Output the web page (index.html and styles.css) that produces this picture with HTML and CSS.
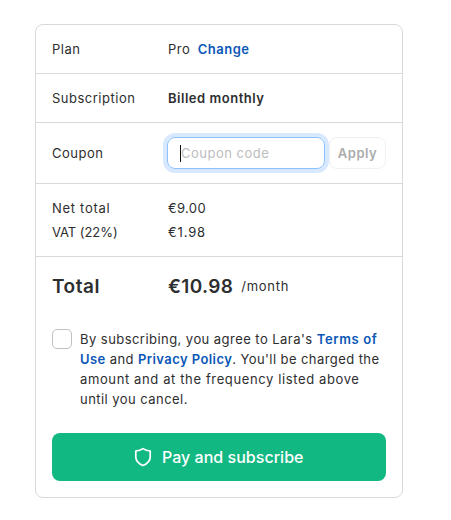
FILE: index.html
```html
<!DOCTYPE html>
<html lang="en">
<head>
<meta charset="utf-8">
<title>Subscription checkout</title>
<link rel="stylesheet" href="styles.css">
</head>
<body>
<main class="card">
  <section class="row plan">
    <span class="label">Plan</span>
    <span class="value"><span>Pro</span><a class="link change">Change</a></span>
  </section>
  <section class="row subscription">
    <span class="label">Subscription</span>
    <span class="value strong">Billed monthly</span>
  </section>
  <section class="row coupon">
    <span class="label">Coupon</span>
    <div class="field"><span class="caret"></span><span class="placeholder">Coupon code</span></div>
    <button class="apply">Apply</button>
  </section>
  <section class="amounts">
    <div class="line"><span class="label net">Net total</span><span>€9.00</span></div>
    <div class="line"><span class="label vat">VAT (22%)</span><span class="tax">€1.98</span></div>
  </section>
  <section class="total">
    <span class="label total-label">Total</span>
    <span class="price">€10.98</span>
    <span class="period">/month</span>
  </section>
  <section class="terms">
    <span class="checkbox"></span>
    <p>
      By subscribing, you agree to Lara's <a class="link wide">Terms of</a><br>
      <span class="charge"><a class="link">Use</a> and <a class="link">Privacy Policy</a>. You'll be charged the</span><br>
      <span class="frequency">amount and at the frequency listed above</span><br>
      <span>until you cancel.</span>
    </p>
  </section>
  <button class="pay">
    <svg class="shield" viewBox="0 0 18 20" fill="none" stroke="currentColor" stroke-width="1.7" stroke-linejoin="round"><path d="M9 1.6C7 3 4.500 3.800 1.800 4V10C1.800 13.800 4.600 16.700 9 18.500C13.400 16.700 16.200 13.800 16.200 10V4C13.500 3.800 11 3 9 1.600Z"/></svg>
    <span>Pay and subscribe</span>
  </button>
</main>
</body>
</html>
```

FILE: styles.css
```css
* { box-sizing: border-box; }
body {
  margin: 0;
  background: #fff;
  color: #2d2e2f;
  font: 13px/20px Inter, sans-serif;
  letter-spacing: 0.5px;
}
.card {
  width: 368px;
  height: 474px;
  margin: 24px 0 0 35px;
  border: 1px solid #d9d9da;
  border-radius: 8px;
  white-space: nowrap;
}
.row { display: flex; align-items: center; padding: 0 16px; border-bottom: 1px solid #d9d9da; }
.plan, .subscription { height: 49px; }
.coupon { height: 61px; }
.label { flex: 0 0 116px; }
.link { color: #0b57b7; font-weight: 600; }
.strong { font-weight: 600; letter-spacing: 0.52px; }
.change { margin-left: 7.5px; }
.field {
  display: flex;
  align-items: center;
  width: 158px;
  height: 32px;
  margin-left: -1px;
  padding-left: 12px;
  border: 1px solid #8cc1ff;
  border-radius: 8px;
  box-shadow: 0 0 0 4px #d8e9ff;
}
.caret { width: 1px; height: 17px; background: #111; }
.placeholder { color: #bcbdc1; }
button { font: inherit; letter-spacing: inherit; padding: 0; }
.apply {
  width: 57px;
  height: 32px;
  margin-left: 4px;
  border: 1px solid #f1f1f2;
  border-radius: 8px;
  background: #fff;
  color: #abacac;
  font-weight: 600;
  letter-spacing: 0.5px;
}
.amounts { height: 73px; padding: 12px 16px; border-bottom: 1px solid #d9d9da; }
.line { display: flex; height: 24px; line-height: 24px; letter-spacing: 0.35px; }
.net { letter-spacing: 0.7px; }
.vat { letter-spacing: -0.05px; }
.tax { letter-spacing: 0.85px; }
.total { display: flex; height: 60px; padding: 0 16px; align-items: center; }
.total-label, .price { font-size: 19px; font-weight: 600; }
.total-label { letter-spacing: 0.55px; }
.price { letter-spacing: 0.35px; }
.period { margin: 0 0 3px 8px; letter-spacing: 0.75px; }
.terms { display: flex; gap: 8px; margin-top: 12px; padding: 0 16px; }
.checkbox { width: 20px; height: 20px; border: 1px solid #bfc0c4; border-radius: 5px; }
.terms p { margin: 0; letter-spacing: 0.45px; }
.wide { letter-spacing: 0.65px; }
.charge { letter-spacing: 0.42px; }
.frequency { letter-spacing: 0.62px; }
.pay {
  display: flex;
  align-items: center;
  justify-content: center;
  gap: 9.5px;
  width: 334px;
  height: 48px;
  margin: 24px 16px 0;
  border: 0;
  border-radius: 8px;
  background: #12b882;
  color: #fff;
  font-size: 16px;
  font-weight: 500;
  letter-spacing: 0.03px;
}
.shield { width: 18px; height: 20px; }
```
